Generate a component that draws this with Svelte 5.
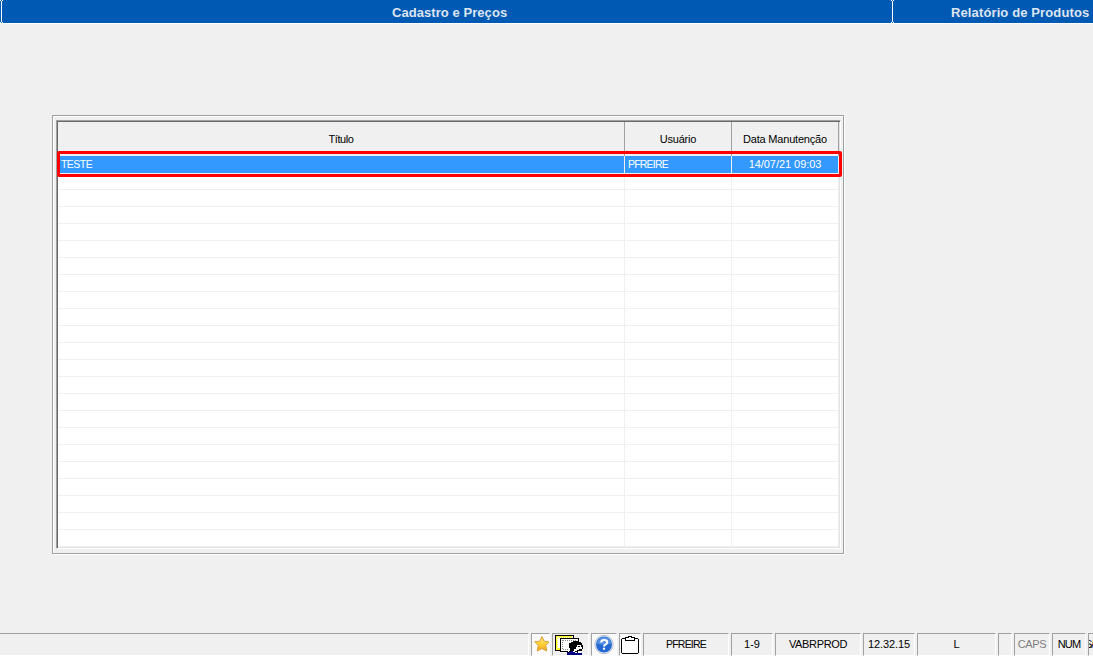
<script>
  const tabs = [
    { id: 'cadastro', label: 'Cadastro e Preços' },
    { id: 'relatorio', label: 'Relatório de Produtos' }
  ];

  const columns = [
    { name: 'titulo', label: 'Título' },
    { name: 'usuario', label: 'Usuário' },
    { name: 'manutencao', label: 'Data Manutenção' }
  ];
  const records = [{ titulo: 'TESTE', usuario: 'PFREIRE', data: '14/07/21 09:03' }];
  const emptyRows = Array.from({ length: 22 });

  const status = [
    { name: 'user', text: 'PFREIRE' },
    { name: 'range', text: '1-9' },
    { name: 'program', text: 'VABRPROD' },
    { name: 'version', text: '12.32.15' },
    { name: 'mode', text: 'L' },
    { name: 'blank', text: '' },
    { name: 'caps', text: 'CAPS' },
    { name: 'num', text: 'NUM' },
    { name: 'last', text: 'S/' }
  ];

  let selected = $state(0);
</script>

<div class="window">
  <nav class="tabs">
    {#each tabs as tab}
      <div class="tab {tab.id}"><span>{tab.label}</span></div>
    {/each}
  </nav>

  <main>
    <div class="frame">
      <div class="grid">
        <div class="row header">
          {#each columns as column}
            <div class="cell {column.name}">{column.label}</div>
          {/each}
        </div>
        {#each records as record, i}
          <div class="row record" class:selected={selected === i} on:click={() => (selected = i)}>
            <div class="cell">{record.titulo}</div>
            <div class="cell user-name">{record.usuario}</div>
            <div class="cell date">{record.data}</div>
          </div>
        {/each}
        {#each emptyRows as _}
          <div class="row"><div class="cell"></div><div class="cell"></div><div class="cell"></div></div>
        {/each}
        <div class="highlight"></div>
      </div>
    </div>
  </main>

  <footer>
    <div class="panel message"></div>
    <div class="panel star">
      <svg width="17" height="19" viewBox="0 0 17 19">
        <defs>
          <linearGradient id="gold" x1="0" y1="0" x2="0" y2="1">
            <stop offset="0" stop-color="#ffe98a" />
            <stop offset="0.5" stop-color="#ffd33c" />
            <stop offset="1" stop-color="#f4a51c" />
          </linearGradient>
        </defs>
        <path d="M8 1.500l2.100 4.700 5.200.6-3.500 3.600.9 5.600L8 13.600 3.300 16l.9-5.600L.7 6.800l5.200-.6z" fill="url(#gold)" stroke="#dda038" stroke-linejoin="round" />
      </svg>
    </div>
    <div class="panel person">
      <svg width="30" height="21" viewBox="0 0 30 21" shape-rendering="crispEdges">
        <path d="M0 1h19v16H0z" fill="#fff" />
        <path d="M1 2h16v14H1z" fill="#ffff30" />
        <path d="M3 4h12v10H3z" fill="#fff" />
        <path d="M2.500 3v12M3 3.500h12" fill="none" stroke="#fff" stroke-dasharray="1 1" />
        <path d="M.5 17V1.500H18.500V4M0 16.500h5" fill="none" stroke="#000" />
        <path d="M5 4h19v15H5z" fill="#fff" />
        <path d="M5.500 18V4.500H23.500V7M5 17.500h8" fill="none" stroke="#000" />
        <path d="M7.500 6v10M8 6.500h14M8 15.500h6" fill="none" stroke="#8c8c8c" stroke-dasharray="1 1" />
        <path d="M14 9h2V8h2V7h6v1h2v1h1v2h1v4h-1v2h-4v2h-7v-1h-2v-1h1v-3h-1z" fill="#000" />
        <path d="M22 11h4v2h1v2h-1v1h-4v1h-3v-2h2v-2h1z" fill="#fff" />
        <path d="M23 12.500h2M24 15.500h2" fill="none" stroke="#000" />
        <path d="M12 18h4v-1h3v1h4v1h4v2H12z" fill="#000080" />
        <path d="M18 17h2v1h2v1h-2v-1h-2z" fill="#fff" />
      </svg>
    </div>
    <div class="panel help">
      <svg width="22" height="21" viewBox="0 0 22 21">
        <circle cx="11" cy="10.500" r="9.200" fill="#e8ecf4" stroke="#bcc2ce" />
        <circle cx="11" cy="10.500" r="8" fill="#2469d2" />
        <path d="M4 9.500a7 6.500 0 0 1 14 0Q10 12 4 9.500" fill="#5791e4" />
        <path d="M8 8.500Q8.300 6 11.200 6q3 0 3 2.300 0 1.400-1.700 2.300-1.500.8-1.500 1.900" fill="none" stroke="#fff" stroke-width="2" />
        <path d="M9.900 13.700h2.200v2H9.900z" fill="#fff" />
      </svg>
    </div>
    <div class="panel clip">
      <svg width="22" height="21" viewBox="0 0 22 21" shape-rendering="crispEdges">
        <path d="M3 4h16v1h1v14h-1v1H3v-1H2V5h1z" fill="#000" />
        <path d="M3 5h16v14H3z" fill="#fff" />
        <path d="M6 3h3V2h4v1h3v4H6z" fill="#000" />
        <path d="M7 4h3V3h2v1h3v2H7z" fill="#fff" />
      </svg>
    </div>
    {#each status as item}
      <div class="panel {item.name}">{item.text}</div>
    {/each}
  </footer>
</div>

<style>
  :global(body) { background: #f0f0f0; overflow: hidden; }

  .window {
    width: 1093px; height: 656px; overflow: hidden;
    display: flex; flex-direction: column;
    background: #f0f0f0; color: #000;
    font-family: "Liberation Sans", Arial, sans-serif; font-size: 11px;
  }

  .tabs { display: flex; height: 23px; flex: none; background: #0059b3; border-bottom: 1px solid #fff; padding-left: 1px; }
  .tab {
    box-sizing: border-box; height: 23px; border-left: 1px solid #fff;
    color: #dde5f0; font-size: 13px; font-weight: bold; line-height: 25px;
    white-space: nowrap; flex: none; position: relative;
  }
  .tab::before, .tab::after {
    content: ''; position: absolute; left: -2px; width: 3px; height: 1px;
    background: linear-gradient(90deg, #fff 1px, #0059b3 1px 2px, #fff 2px);
  }
  .tab::before { top: 0; }
  .tab::after { bottom: 0; }
  .cadastro { width: 891px; padding-left: 390px; letter-spacing: 0.06px; }
  .relatorio { width: 201px; padding-left: 58px; letter-spacing: 0.12px; }

  main { flex: 1; padding: 91px 0 0 52px; }

  .frame {
    box-sizing: border-box; width: 792px; height: 439px; padding: 4px 3px 3px;
    border: 1px solid #a0a0a0;
    box-shadow: inset 1px 1px #fff, 1px 1px #fff;
  }

  .grid {
    position: relative; box-sizing: border-box; width: 785px; height: 429px;
    border: 1px solid; border-color: #a0a0a0 #fff #fff #a0a0a0;
    box-shadow: inset 1px 1px #696969, inset -1px -1px #e3e3e3;
    padding: 1px; background: #fff;
  }

  .row { display: grid; grid-template-columns: 567px 107px 107px; height: 17px; }
  .cell {
    box-sizing: border-box; border-right: 1px solid #f0f0f0; border-bottom: 1px solid #f0f0f0;
    white-space: nowrap;
  }
  .header { height: 34px; background: #f0f0f0; }
  .header .cell { line-height: 35px; text-align: center; border-right-color: #a0a0a0; border-bottom-color: #a0a0a0; letter-spacing: -0.2px; }
  .header .titulo { letter-spacing: -0.4px; }
  .record .cell { padding-left: 3px; line-height: 17px; font-size: 10.5px; letter-spacing: -0.55px; }
  .record .user-name { letter-spacing: -0.8px; }
  .record .date { padding: 0; text-align: center; font-size: 11px; letter-spacing: -0.05px; }
  .selected .cell { background: #3399ff; color: #fff; }

  .highlight {
    position: absolute; left: 0; top: 30px; box-sizing: border-box;
    width: 785px; height: 26px; border: 3px solid #f00; border-radius: 2px;
    pointer-events: none;
  }

  footer { display: flex; gap: 2px; height: 23px; flex: none; }
  .panel {
    box-sizing: border-box; height: 23px; flex: none; overflow: hidden;
    border: 1px solid; border-color: #a0a0a0 #fff #fff #a0a0a0;
    line-height: 21px; text-align: center; white-space: nowrap;
  }
  .panel svg { display: block; }
  .message { width: 529px; border-left: 0; }
  .star { width: 19px; padding: 1px 0 0 2px; background: #fafafa; }
  .person { width: 37px; padding: 0 0 0 2px; }
  .help { width: 26px; background: #fafafa; padding-left: 1px; }
  .clip { width: 22px; background: #fafafa; }
  .clip svg { margin-left: -1px; }
  .user { width: 86px; font-size: 10.5px; letter-spacing: -0.8px; }
  .range { width: 42px; }
  .program { width: 86px; letter-spacing: -0.35px; }
  .version { width: 52px; letter-spacing: -0.1px; }
  .mode { width: 79px; }
  .blank { width: 14px; }
  .caps { width: 36px; color: #808080; letter-spacing: -0.4px; }
  .num { width: 34px; letter-spacing: -0.8px; }
  .last { width: 10px; text-align: left; text-indent: -4px; letter-spacing: -1px; }
</style>
